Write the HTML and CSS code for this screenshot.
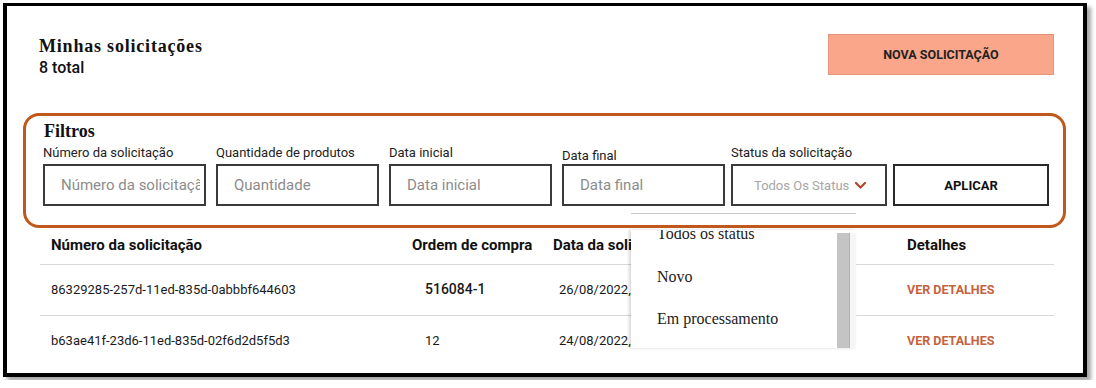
FILE: index.html
```html
<!DOCTYPE html>
<html lang="pt-BR">
<head>
<meta charset="utf-8">
<title>Minhas solicitações</title>
<link rel="stylesheet" href="styles.css">
</head>
<body>
<div class="frame">
  <header class="top">
    <div class="title-block">
      <h1 class="title">Minhas solicitações</h1>
      <div class="count">8 total</div>
    </div>
    <button class="btn-new" type="button">NOVA SOLICITAÇÃO</button>
  </header>

  <section class="filters">
    <h2 class="filters-title">Filtros</h2>
    <div class="filters-row">
      <div class="field">
        <label class="field-label">Número da solicitação</label>
        <input class="field-input" type="text" placeholder="Número da solicitação">
      </div>
      <div class="field">
        <label class="field-label">Quantidade de produtos</label>
        <input class="field-input" type="text" placeholder="Quantidade">
      </div>
      <div class="field">
        <label class="field-label">Data inicial</label>
        <input class="field-input" type="text" placeholder="Data inicial">
      </div>
      <div class="field field--last">
        <label class="field-label field-label--low">Data final</label>
        <input class="field-input" type="text" placeholder="Data final">
      </div>
      <div class="field field--status">
        <label class="field-label">Status da solicitação</label>
        <div class="select">
          <span class="select-text">Todos Os Status</span>
          <svg class="chevron" width="11" height="7" viewBox="0 0 11 7"><polyline points="1,1 5.5,5.5 10,1" fill="none" stroke="#b8432a" stroke-width="2.2" stroke-linecap="round" stroke-linejoin="round"/></svg>
        </div>
      </div>
      <button class="btn-apply" type="button">APLICAR</button>
    </div>
  </section>

  <div class="table">
    <div class="trow thead">
      <div class="c c1">Número da solicitação</div>
      <div class="c c2">Ordem de compra</div>
      <div class="c c3">Data da solicitação</div>
      <div class="c c4"></div>
      <div class="c c5">Detalhes</div>
    </div>
    <div class="trow tbody">
      <div class="c c1 id">86329285-257d-11ed-835d-0abbbf644603</div>
      <div class="c c2 po po--big">516084-1</div>
      <div class="c c3 date">26/08/2022,</div>
      <div class="c c4"></div>
      <div class="c c5"><a class="details">VER DETALHES</a></div>
    </div>
    <div class="trow tbody tbody--last">
      <div class="c c1 id">b63ae41f-23d6-11ed-835d-02f6d2d5f5d3</div>
      <div class="c c2 po">12</div>
      <div class="c c3 date">24/08/2022,</div>
      <div class="c c4"></div>
      <div class="c c5"><a class="details">VER DETALHES</a></div>
    </div>
  </div>

  <div class="dropdown">
    <div class="dropdown-view">
      <ul class="options">
        <li>Todos os status</li>
        <li>Novo</li>
        <li>Em processamento</li>
      </ul>
    </div>
    <div class="scrollbar"></div>
  </div>
</div>
</body>
</html>
```

FILE: styles.css
```css
body {
  margin: 0;
  background: #fff;
  font-family: Roboto, "Liberation Sans", sans-serif;
  color: #1a1a1a;
}

.frame {
  position: relative;
  margin: 3px;
  width: 1084px;
  height: 374px;
  box-sizing: border-box;
  border: 4px solid #000;
  border-top-width: 3px;
  background: #fff;
  box-shadow: 4px 4px 4px rgba(0, 0, 0, 0.35);
}

/* header */
.top {
  display: flex;
  justify-content: space-between;
  align-items: flex-start;
  padding: 30px 29px 0 32px;
}

.title {
  margin: 0;
  font: 700 18px/20px "Liberation Serif", serif;
  letter-spacing: 0.8px;
  color: #111;
}

.count {
  margin-top: 3px;
  font: 500 16px/18px Roboto, sans-serif;
  color: #111;
}

.btn-new {
  margin-top: -2px;
  width: 226px;
  height: 41px;
  background: #f9a68a;
  border: 1px solid #e2957b;
  font: 700 12.5px Roboto, sans-serif;
  color: #222;
  padding: 0;
}

/* filters card */
.filters {
  position: relative;
  z-index: 3;
  margin: 36px 17px 0 16px;
  border: 3px solid #c0581c;
  border-radius: 16px;
  padding: 5px 12px 19px 17px;
}

.filters-title {
  margin: 0 0 5px 1px;
  font: 700 18px/20px "Liberation Serif", serif;
  color: #111;
}

.filters-row {
  display: flex;
  align-items: flex-start;
}

.field {
  display: flex;
  flex-direction: column;
  flex: none;
  width: 163px;
  margin-right: 10px;
}

.field--last {
  margin-right: 6px;
}

.field--status {
  width: 156px;
  margin-right: 6px;
}

.field-label {
  font: 400 13px/14px Roboto, sans-serif;
  color: #222;
  margin-bottom: 4px;
  white-space: nowrap;
}

.field-label--low {
  padding-top: 3px;
  margin-bottom: 1px;
}

.field-input {
  box-sizing: border-box;
  width: 163px;
  height: 42px;
  margin: 0;
  border: 2px solid #3a3a3a;
  padding: 0 4px 0 16px;
  font: 400 15px Roboto, sans-serif;
  color: #222;
  background: #fff;
  outline: none;
}

.field-input::placeholder {
  color: #8c8c8c;
}

.select {
  box-sizing: border-box;
  height: 42px;
  border: 2px solid #3a3a3a;
  display: flex;
  align-items: center;
  padding-left: 21px;
}

.select-text {
  font: 400 13px Roboto, sans-serif;
  color: #a6a6a6;
}

.chevron {
  margin-left: 6px;
  margin-top: 1px;
}

.btn-apply {
  flex: none;
  box-sizing: border-box;
  margin-top: 18px;
  width: 156px;
  height: 42px;
  border: 2px solid #2a2a2a;
  background: #fff;
  font: 700 13px Roboto, sans-serif;
  color: #111;
  padding: 0;
}

/* table */
.table {
  margin-left: 33px;
  width: 1014px;
}

.trow {
  display: grid;
  grid-template-columns: 361px 141px 180px 174px 158px;
  align-items: center;
  border-bottom: 1px solid #d8d8d8;
}

.thead {
  height: 37px;
  padding-bottom: 2px;
  box-sizing: border-box;
}

.thead .c {
  font: 700 15px Roboto, sans-serif;
  color: #111;
  padding-left: 11px;
  white-space: nowrap;
}

.tbody {
  height: 51px;
  box-sizing: border-box;
  padding-bottom: 2px;
}

.tbody--last {
  border-bottom: none;
}

.tbody .c {
  font: 400 13px Roboto, sans-serif;
  color: #1a1a1a;
  padding-left: 11px;
  white-space: nowrap;
}

.tbody .c2 {
  padding-left: 24px;
}

.tbody .c3 {
  padding-left: 17px;
}

.tbody .po--big {
  font-size: 14px;
  font-weight: 500;
}

.details {
  font: 700 12.5px Roboto, sans-serif;
  color: #c5623e;
  text-decoration: none;
}

/* open status dropdown */
.dropdown {
  position: absolute;
  z-index: 2;
  left: 624px;
  top: 224px;
  width: 225px;
  height: 118px;
  background: #fff;
  box-shadow: -2px 0 3px rgba(0, 0, 0, 0.16);
}

.dropdown::before {
  content: "";
  position: absolute;
  left: 0;
  right: 0;
  top: -17px;
  height: 1px;
  background: #c9c9c9;
}

.dropdown::after {
  content: "";
  position: absolute;
  right: 0;
  top: 3px;
  bottom: 0;
  width: 6px;
  background: #f6f6f6;
}

.dropdown-view {
  height: 100%;
  overflow: hidden;
}

.options {
  margin: -18px 0 0;
  padding: 0;
  list-style: none;
}

.options li {
  font: 400 16px/42px "Liberation Serif", serif;
  color: #222;
  padding-left: 26px;
  white-space: nowrap;
}

.options li:first-child {
  line-height: 44px;
}

.scrollbar {
  position: absolute;
  right: 6px;
  top: 3px;
  bottom: 0;
  width: 13px;
  background: #c4c4c4;
  border-right: 1px solid #b3b3b3;
  box-sizing: border-box;
}
```
